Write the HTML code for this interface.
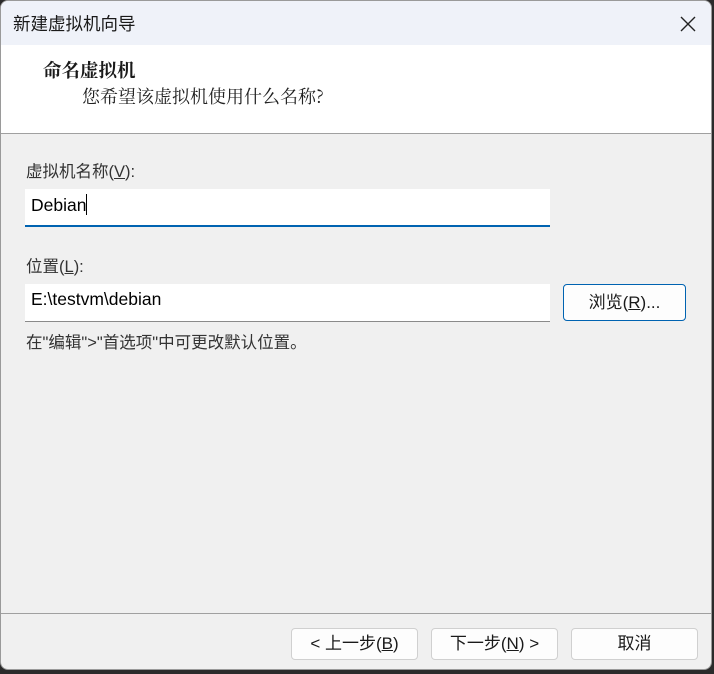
<!DOCTYPE html>
<html><head><meta charset="utf-8"><style>
*{margin:0;padding:0;box-sizing:border-box}
body{width:714px;height:674px;background:#2b2b2b;position:relative;overflow:hidden;font-family:"Liberation Sans","Noto Sans CJK SC",sans-serif;font-size:16px;color:#1a1a1a}
.win{position:absolute;left:0;top:0;width:712px;height:670px;background:#f0f0f0;border:1px solid #9a9a9a;border-radius:8px;overflow:hidden}
.title{position:absolute;left:0;top:0;width:100%;height:44px;background:#eff2f9;font-size:17.5px}
.title span{position:absolute;left:12px;top:10px}
.close{position:absolute;left:678px;top:14px}
.head{position:absolute;left:0;top:44px;width:100%;height:89px;background:#fff;border-bottom:1px solid #a0a0a0}
.h1{position:absolute;left:42px;top:12px;font-weight:bold;font-size:18.5px;font-family:"Noto Serif CJK SC","Noto Sans CJK SC",serif}
.h2{position:absolute;left:81px;top:38px;font-size:18px;font-family:"Noto Serif CJK SC","Noto Sans CJK SC",serif;color:#222}
.lbl{position:absolute;left:25px;font-size:16.5px;color:#333}
.inp{position:absolute;left:24px;width:525px;height:38px;background:#fff;border-bottom:1px solid #8a8a8a;padding:5px 6px;font-size:17.5px;color:#000}
.btn{position:absolute;height:32px;background:#fdfdfd;border:1px solid #d0d0d0;border-radius:4px;text-align:center;line-height:30px;font-size:17px;color:#1a1a1a}
.sep{position:absolute;left:0;top:612px;width:100%;height:1px;background:#a0a0a0}
u{text-decoration:underline}
</style></head><body>
<div class="win">
<div class="title"><span>新建虚拟机向导</span>
<svg class="close" width="18" height="18" viewBox="0 0 18 18"><path d="M2 2L16 16M16 2L2 16" stroke="#222" stroke-width="1.4"/></svg></div>
<div class="head"><div class="h1">命名虚拟机</div><div class="h2">您希望该虚拟机使用什么名称?</div></div>
<div class="lbl" style="top:157px">虚拟机名称(<u>V</u>):</div>
<div class="inp" style="top:188px;border-bottom:2px solid #0063b1">Debian<span style="display:inline-block;width:1px;height:21px;background:#000;vertical-align:-4px"></span></div>
<div class="lbl" style="top:252px">位置(<u>L</u>):</div>
<div class="inp" style="top:283px">E:\testvm\debian</div>
<div class="btn" style="left:562px;top:283px;width:123px;height:37px;line-height:35px;border:1px solid #0063b1">浏览(<u>R</u>)...</div>
<div class="lbl" style="top:328px">在"编辑"&gt;"首选项"中可更改默认位置。</div>
<div class="sep"></div>
<div class="btn" style="left:290px;top:627px;width:127px">&lt; 上一步(<u>B</u>)</div>
<div class="btn" style="left:430px;top:627px;width:127px">下一步(<u>N</u>) &gt;</div>
<div class="btn" style="left:570px;top:627px;width:127px">取消</div>
</div>
</body></html>
